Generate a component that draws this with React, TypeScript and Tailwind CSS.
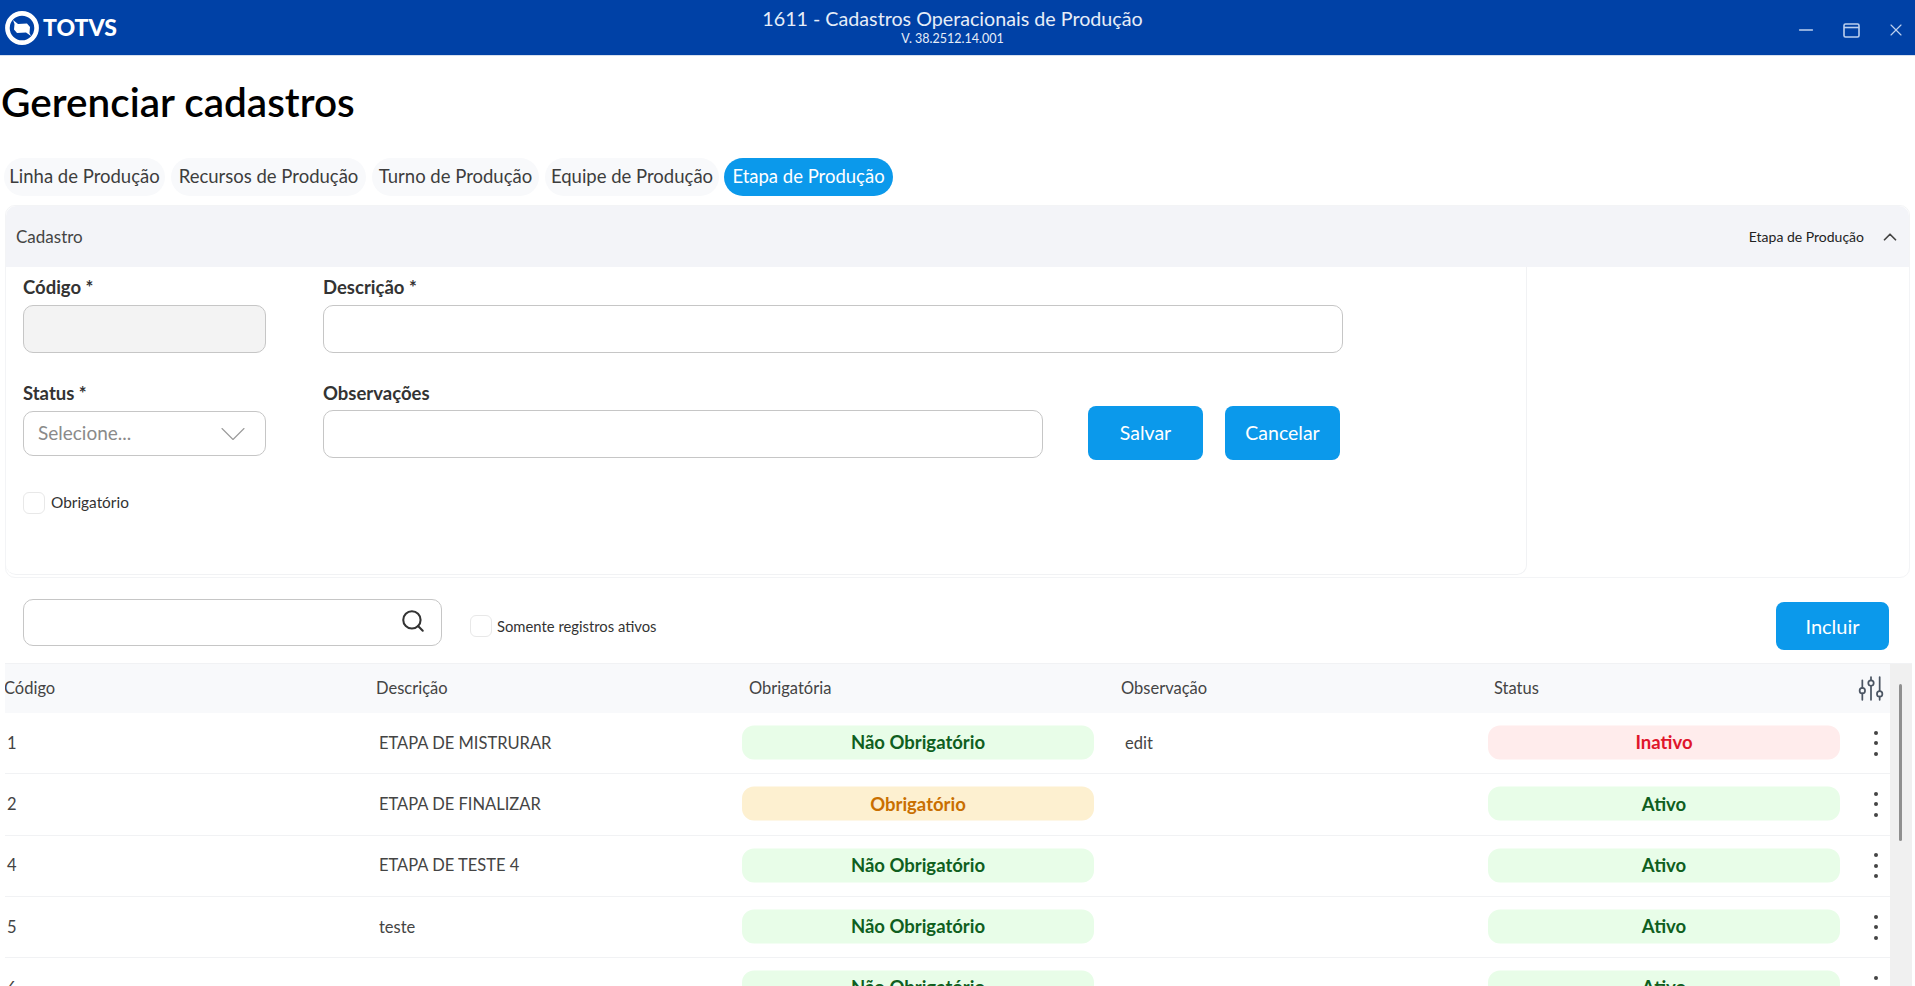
import React from 'react';
import { ChevronDown, ChevronUp, Minus, Search, X } from 'lucide-react';

const rows = [
  { id: '1', desc: 'ETAPA DE MISTRURAR', required: false, obs: 'edit', active: false },
  { id: '2', desc: 'ETAPA DE FINALIZAR', required: true, obs: '', active: true },
  { id: '4', desc: 'ETAPA DE TESTE 4', required: false, obs: '', active: true },
  { id: '5', desc: 'teste', required: false, obs: '', active: true },
  { id: '6', desc: '', required: false, obs: '', active: true },
];

const tabs = [
  { label: 'Linha de Produção', width: 'w-[161px]' },
  { label: 'Recursos de Produção', width: 'w-[195px]' },
  { label: 'Turno de Produção', width: 'w-[167px]' },
  { label: 'Equipe de Produção', width: 'w-[174px]' },
];

const Logo = () => (
  <svg width="34" height="34" viewBox="0 0 34 34" className="shrink-0">
    <circle cx="17" cy="17" r="14.6" fill="none" stroke="#fff" strokeWidth="4.6" />
    <path d="M8 9 L13 13 L22 12.5 L25 16 L24.5 22 L26 25 L21 21.5 L12 22 L9 18.5 L9.5 13 Z" fill="#fff" />
    <path d="M15 16.5 L20 16 L19.5 18 L14.5 18.5 Z" fill="#fff" />
  </svg>
);

const Sliders = () => (
  <svg width="26" height="26" viewBox="0 0 24 24" fill="none" stroke="#4b5563" strokeWidth="1.6" strokeLinecap="round">
    <path d="M4 4v7M4 16v6M12 1v3M12 9v13M20 1v13M20 19v3" />
    <circle cx="4" cy="13.5" r="2.5" />
    <circle cx="12" cy="6.5" r="2.5" />
    <circle cx="20" cy="16.5" r="2.5" />
  </svg>
);

const Restore = () => (
  <svg width="17" height="15" viewBox="0 0 17 15" fill="none" stroke="#bcd0ee" strokeWidth="1.6">
    <rect x="1" y="1" width="15" height="13" rx="1.5" />
    <path d="M1 4.5h15" />
  </svg>
);

const Pill = ({ className, children }: { className: string; children: React.ReactNode }) => (
  <div className={`flex h-[34px] items-center justify-center rounded-[12px] text-[18.5px] font-bold ${className}`}>
    {children}
  </div>
);

const Checkbox = () => (
  <span className="h-[22px] w-[22px] shrink-0 rounded-[6px] border border-[#e8e8e8] bg-white" />
);

const Label = ({ children }: { children: React.ReactNode }) => (
  <label className="block text-[18.5px] leading-[20px] font-bold text-[#333]">{children}</label>
);

export default function App() {
  return (
    <div className="h-[986px] w-[1915px] overflow-hidden bg-white font-['Lato','Liberation_Sans',sans-serif] text-[#333]">
      <header className="relative flex h-[56px] items-center border-b border-[#d5dfef] bg-[#0041a6] pl-[5px] text-white">
        <Logo />
        <span className="ml-[4px] text-[23px] font-black">TOTVS</span>
        <div className="absolute top-[6px] right-[10px] left-0 text-center">
          <div className="text-[19.7px] leading-[25px] text-[#e6edf8]">1611 - Cadastros Operacionais de Produção</div>
          <div className="text-[12.5px] leading-[15px] text-[#e6edf8]">V. 38.2512.14.001</div>
        </div>
        <div className="ml-auto flex items-center gap-[26px] pr-[9px] pt-[5px] text-[#bcd0ee]">
          <Minus size={22} strokeWidth={1.5} />
          <Restore />
          <X size={20} strokeWidth={1.4} />
        </div>
      </header>

      <h1 className="mt-[22px] pl-[1px] text-[40.5px] leading-[48px] font-semibold text-black">Gerenciar cadastros</h1>

      <nav className="mt-[32px] flex gap-[6px] pl-[4px]">
        {tabs.map((t) => (
          <div
            key={t.label}
            className={`flex h-[38px] items-center justify-center rounded-full bg-[#f8f9fb] text-[18.5px] whitespace-nowrap text-[#3d3d3d] ${t.width}`}
          >
            {t.label}
          </div>
        ))}
        <div className="-ml-[1px] flex h-[38px] w-[169px] items-center justify-center rounded-full bg-[#0b99eb] text-[18.5px] whitespace-nowrap text-white">
          Etapa de Produção
        </div>
      </nav>

      <section className="mt-[9px] ml-[5px] h-[373px] w-[1905px] rounded-[10px] border border-[#f3f4f6]">
        <div className="flex h-[61px] items-center justify-between rounded-t-[10px] bg-[#f3f4f8] pr-[8px] pl-[10px] text-[17px] text-[#444]">
          <span>Cadastro</span>
          <div className="flex items-center gap-[15px] text-[14px] text-[#222]">
            <span>Etapa de Produção</span>
            <ChevronUp size={22} strokeWidth={1.9} className="text-[#444]" />
          </div>
        </div>
        <div className="h-[308px] w-[1521px] rounded-b-[10px] border-r border-b border-[#f1f2f4] pt-[10px] pl-[17px]">
          <div className="flex gap-[57px]">
            <div className="w-[243px]">
              <Label>Código *</Label>
              <div className="mt-[8px] h-[48px] rounded-[10px] border-[1.5px] border-[#c6c6c6] bg-[#f3f3f3]" />
            </div>
            <div className="w-[1020px]">
              <Label>Descrição *</Label>
              <div className="mt-[8px] h-[48px] rounded-[10px] border-[1.5px] border-[#c6c6c6] bg-white" />
            </div>
          </div>

          <div className="mt-[30px] flex items-start gap-[57px]">
            <div className="w-[243px]">
              <Label>Status *</Label>
              <div className="mt-[8px] flex h-[45px] items-center justify-between rounded-[10px] border-[1.5px] border-[#c6c6c6] bg-white pr-[10px] pl-[14px] text-[19px] text-[#8a8a8a]">
                <span>Selecione...</span>
                <ChevronDown size={44} strokeWidth={0.6} className="-my-[10px] text-[#9a9a9a]" />
              </div>
            </div>
            <div className="w-[720px]">
              <Label>Observações</Label>
              <div className="mt-[7px] h-[48px] rounded-[10px] border-[1.5px] border-[#c6c6c6] bg-white" />
            </div>
            <div className="-ml-[12px] flex gap-[22px] pt-[23px]">
              <button className="h-[54px] w-[115px] rounded-[8px] bg-[#0b99eb] text-[19.5px] text-white">Salvar</button>
              <button className="h-[54px] w-[115px] rounded-[8px] bg-[#0b99eb] text-[19.5px] text-white">Cancelar</button>
            </div>
          </div>

          <div className="mt-[31px] flex items-center gap-[6px] text-[15.4px] text-[#333]">
            <Checkbox />
            <span>Obrigatório</span>
          </div>
        </div>
      </section>

      <div className="mt-[21px] flex items-start pr-[26px] pl-[23px]">
        <div className="flex h-[47px] w-[419px] items-center justify-end rounded-[10px] border-[1.5px] border-[#c6c6c6] pr-[15px]">
          <Search size={26} strokeWidth={1.9} className="-mt-[3px] text-[#333]" />
        </div>
        <div className="mt-[16px] ml-[28px] flex items-center gap-[5px] text-[14.8px]">
          <Checkbox />
          <span>Somente registros ativos</span>
        </div>
        <button className="mt-[3px] ml-auto h-[48px] w-[113px] rounded-[8px] bg-[#0b99eb] text-[20px] text-white">
          Incluir
        </button>
      </div>

      <div className="mt-[13px] ml-[5px] flex w-[1907px] border-t border-[#f1f2f4]">
        <div className="w-[1885px] overflow-hidden">
          <div className="grid h-[49px] grid-cols-[371px_373px_372px_373px_1fr] items-center bg-[#f8f9fb] text-[16.5px] text-[#444]">
            <span className="-ml-[1px]">Código</span>
            <span>Descrição</span>
            <span>Obrigatória</span>
            <span>Observação</span>
            <div className="flex items-center justify-between pr-[6px]">
              <span>Status</span>
              <Sliders />
            </div>
          </div>
          {rows.map((r) => (
            <div
              key={r.id}
              className="grid h-[61.3px] grid-cols-[372px_372px_372px_373px_351px_1fr] items-center border-b border-[#f1f2f4] text-[16.5px] text-[#444]"
            >
              <span className="pl-[2px]">{r.id}</span>
              <span className="pl-[2px]">{r.desc}</span>
              <div className="w-[352px] -translate-x-[7px] -translate-y-[0.5px]">
                {r.required ? (
                  <Pill className="bg-[#fdf0d0] text-[#c96f00]">Obrigatório</Pill>
                ) : (
                  <Pill className="bg-[#e8fde8] text-[#0f5f1e]">Não Obrigatório</Pill>
                )}
              </div>
              <span className="pl-[4px]">{r.obs}</span>
              <div className="w-[352px] -translate-x-[6px] -translate-y-[0.5px]">
                {r.active ? (
                  <Pill className="bg-[#e8fde8] text-[#0f5f1e]">Ativo</Pill>
                ) : (
                  <Pill className="bg-[#ffecec] text-[#e0162b]">Inativo</Pill>
                )}
              </div>
              <div className="flex flex-col items-center gap-[6.5px] pl-[17px]">
                <span className="h-[4px] w-[4px] rounded-full bg-[#444]" />
                <span className="h-[4px] w-[4px] rounded-full bg-[#444]" />
                <span className="h-[4px] w-[4px] rounded-full bg-[#444]" />
              </div>
            </div>
          ))}
        </div>
        <div className="relative h-[330px] w-[22px] bg-[#f0f0f0]">
          <div className="absolute top-[20px] left-[9px] h-[157px] w-[3px] rounded-full bg-[#8f8f8f]" />
        </div>
      </div>
    </div>
  );
}
